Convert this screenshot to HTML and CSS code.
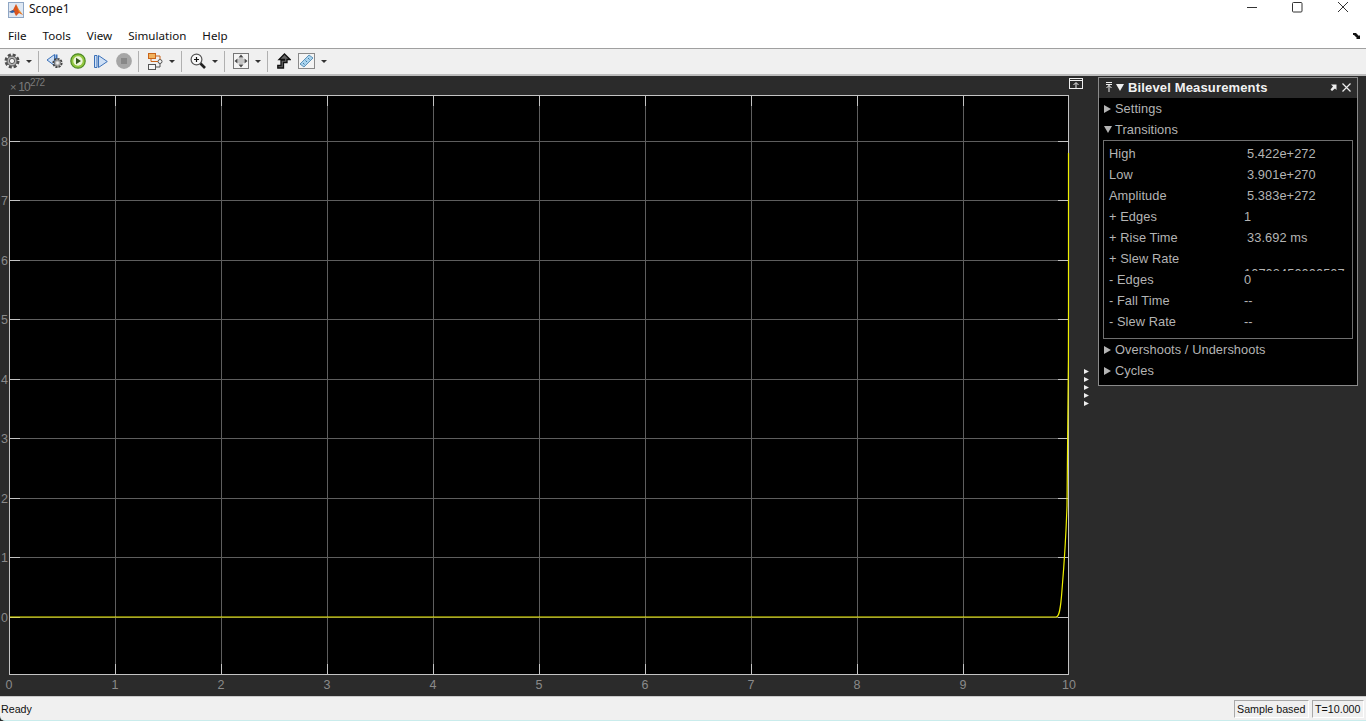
FILE: index.html
```html
<!DOCTYPE html>
<html lang="en">

<head>
    <meta charset="UTF-8">
    <title>Scope1</title>
    <link rel="stylesheet" href="styles.css">
</head>

<body>
<div class="titlebar">
    <svg class="appicon" width="16" height="16" viewBox="0 0 16 16">
        <rect x="0.5" y="0.5" width="15" height="15" fill="#dfe8f3" stroke="#8fa6c4"/>
        <path d="M1 10 L5 8 L8 2 L11 8 L15 13 L11 11 L8 14 L6 10 Z" fill="#d9541e"/>
        <path d="M1 10 L5 8 L7 10 L4 11 Z" fill="#2b62a8"/>
        <path d="M8 2 L11 8 L15 13 L11 10 Z" fill="#f0982c"/>
    </svg>
    <span class="wintitle">Scope1</span>
    <div class="winbtns">
        <svg width="46" height="14" viewBox="0 0 46 14"><path d="M19 7.5 H29" stroke="#333" fill="none"/></svg>
        <svg width="46" height="14" viewBox="0 0 46 14"><rect x="18.5" y="2.5" width="9.500" height="9.500" rx="1" stroke="#333" fill="none"/></svg>
        <svg width="46" height="14" viewBox="0 0 46 14"><path d="M18 2 L28 12 M28 2 L18 12" stroke="#333" fill="none"/></svg>
    </div>
</div>

<div class="menubar">
    <span class="menu">File</span>
    <span class="menu">Tools</span>
    <span class="menu">View</span>
    <span class="menu">Simulation</span>
    <span class="menu">Help</span>
    <svg class="dock" width="9" height="7" viewBox="0 0 9 7"><path d="M0 0 H3 L6 3 L7 2 V6 H3 L4 5 L1 2 H0 Z" fill="#111"/></svg>
</div>

<div class="toolbar">
    <span class="tool">
        <svg width="16" height="16" viewBox="0 0 16 16"><circle cx="8" cy="8" r="6.200" fill="none" stroke="#4f4f4f" stroke-width="2.600" stroke-dasharray="3 1.860"/><circle cx="8" cy="8" r="5" fill="#b4b4b4" stroke="#555"/><circle cx="8" cy="8" r="2.600" fill="#f2f2f2" stroke="#5c5c5c"/></svg>
    </span>
    <span class="caret"></span>
    <span class="sep"></span>

    <span class="tool">
        <svg width="18" height="16" viewBox="0 0 18 16"><path d="M8.500 1.500 L1 7 L8.500 12.500 Z" fill="#cfe0f5" stroke="#3a70b8"/><path d="M10.500 1.500 V6" stroke="#3a70b8" stroke-width="2"/><circle cx="11.500" cy="10" r="4.200" fill="none" stroke="#444" stroke-width="1.800" stroke-dasharray="2.200 1"/><circle cx="11.500" cy="10" r="3.200" fill="#b4b4b4" stroke="#555" stroke-width=".6"/><circle cx="11.500" cy="10" r="1.400" fill="#f2f2f2"/></svg>
    </span>
    <span class="tool">
        <svg width="16" height="16" viewBox="0 0 16 16"><circle cx="8" cy="8" r="7.200" fill="#93c740" stroke="#4c8a22" stroke-width="1.200"/><circle cx="8" cy="8" r="4.700" fill="#eef6dc"/><path d="M6 4.800 L11 8 L6 11.200 Z" fill="#33561c"/></svg>
    </span>
    <span class="tool">
        <svg width="14" height="13" viewBox="0 0 14 13"><path d="M0.500 0.500 H3 V12.500 H0.500 Z M4.500 0.500 L13.300 6.500 L4.500 12.500 Z" fill="#cfe0f5" stroke="#3a70b8"/></svg>
    </span>
    <span class="tool">
        <svg width="16" height="16" viewBox="0 0 16 16"><circle cx="8" cy="8" r="7.900" fill="#a6a6a6"/><rect x="5" y="5" width="6" height="6" fill="#888"/></svg>
    </span>
    <span class="sep"></span>

    <span class="tool">
        <svg width="16" height="17" viewBox="0 0 16 17"><rect x="1.500" y="0.500" width="7" height="5" fill="#f2b25c" stroke="#c9641a"/><rect x="1.500" y="11.500" width="7" height="5" fill="#f6f6f6" stroke="#555"/><circle cx="13" cy="8.500" r="2" fill="#f6f6f6" stroke="#555"/><path d="M8.500 3 H13 V6.500 M4 5.500 V8.500 H11" stroke="#c9641a" fill="none"/><path d="M8.500 14 H13 V10.500" stroke="#555" fill="none"/></svg>
    </span>
    <span class="caret"></span>
    <span class="sep"></span>

    <span class="tool">
        <svg width="16" height="16" viewBox="0 0 16 16"><circle cx="6.500" cy="6.500" r="5.400" fill="#f8f8f8" stroke="#555" stroke-width="1.200"/><path d="M4 6.500 H9 M6.500 4 V9" stroke="#111" stroke-width="1.200"/><path d="M10.500 10.500 L15 15" stroke="#222" stroke-width="2.600"/></svg>
    </span>
    <span class="caret"></span>
    <span class="sep"></span>

    <span class="tool">
        <svg width="16" height="16" viewBox="0 0 16 16"><rect x="0.500" y="0.500" width="15" height="15" fill="#f4f4f4" stroke="#777"/><circle cx="8" cy="8" r="3.200" fill="#c4c4c4"/><path d="M8 1.500 L10.500 4.500 H5.500 Z M8 14.500 L10.500 11.500 H5.500 Z M1.500 8 L4.500 5.500 V10.500 Z M14.500 8 L11.500 5.500 V10.500 Z" fill="#4a4a4a"/></svg>
    </span>
    <span class="caret"></span>
    <span class="sep"></span>

    <span class="tool">
        <svg width="14" height="16" viewBox="0 0 14 16"><path d="M7.500 1 L13 6.500 H10 V9.500 H6.500 V15 H0.800 V12.500 H4 V7 H7.500 V6.500 H2 Z" fill="#666" stroke="#111" stroke-width="1.300"/></svg>
    </span>
    <span class="tool">
        <svg width="17" height="16" viewBox="0 0 17 16"><rect x="0.500" y="0.500" width="16" height="15" fill="#f4f4f4" stroke="#8a8a8a"/><path d="M2 11 L11 2 L15 5 L6 14 Z" fill="#a9d3ee" stroke="#5d93b8"/><path d="M5 10 L6.500 11.500 M7.500 7.500 L9 9 M10 5 L11.500 6.500" stroke="#3f7ea8"/></svg>
    </span>
    <span class="caret"></span>
</div>

<div class="main">
    <div class="plot">
        <svg class="axes" width="1098" height="620" viewBox="0 0 1098 620">
            <rect x="9.500" y="19.500" width="1059" height="579" fill="#000" stroke="#c4c4c4"/>
            <g stroke="#5e5e5e">
                <path d="M115.500 20 V598 M221.500 20 V598 M327.500 20 V598 M433.500 20 V598 M539.500 20 V598 M645.500 20 V598 M751.500 20 V598 M857.500 20 V598 M963.500 20 V598"/>
                <path d="M10 65.500 H1068 M10 124.500 H1068 M10 184.500 H1068 M10 243.500 H1068 M10 303.500 H1068 M10 362.500 H1068 M10 422.500 H1068 M10 481.500 H1068 M10 541.500 H1068"/>
            </g>
            <g stroke="#c4c4c4">
                <path d="M115.500 20 V30 M221.500 20 V30 M327.500 20 V30 M433.500 20 V30 M539.500 20 V30 M645.500 20 V30 M751.500 20 V30 M857.500 20 V30 M963.500 20 V30"/>
                <path d="M115.500 588 V598 M221.500 588 V598 M327.500 588 V598 M433.500 588 V598 M539.500 588 V598 M645.500 588 V598 M751.500 588 V598 M857.500 588 V598 M963.500 588 V598"/>
                <path d="M10 65.500 H20 M10 124.500 H20 M10 184.500 H20 M10 243.500 H20 M10 303.500 H20 M10 362.500 H20 M10 422.500 H20 M10 481.500 H20 M10 541.500 H20"/>
                <path d="M1058 65.500 H1068 M1058 124.500 H1068 M1058 184.500 H1068 M1058 243.500 H1068 M1058 303.500 H1068 M1058 362.500 H1068 M1058 422.500 H1068 M1058 481.500 H1068 M1058 541.500 H1068"/>
            </g>
            <path class="trace" d="M10 541 H1056 C1059 541 1060.500 535 1062 514 C1064 490 1066 460 1067 430 C1068 380 1068.500 300 1068.500 230 V77"/>
            <g class="ticks">
                <text x="1" y="546">0</text><text x="1" y="486">1</text><text x="1" y="427">2</text><text x="1" y="367">3</text><text x="1" y="308">4</text><text x="1" y="248">5</text><text x="1" y="189">6</text><text x="1" y="129">7</text><text x="1" y="70">8</text>
            </g>
            <g class="ticks mid">
                <text x="9" y="613">0</text><text x="115" y="613">1</text><text x="221" y="613">2</text><text x="327" y="613">3</text><text x="433" y="613">4</text><text x="539" y="613">5</text><text x="645" y="613">6</text><text x="751" y="613">7</text><text x="857" y="613">8</text><text x="963" y="613">9</text><text x="1069" y="613">10</text>
            </g>
            <text class="ticks scale" x="10" y="15"><tspan class="times">×</tspan> 10<tspan class="exp" dy="-5">272</tspan></text>
            <rect x="1069.500" y="2.500" width="13" height="10" fill="none" stroke="#eee"/>
            <path d="M1070 4.500 H1082 M1076 12 V7 M1073.500 9 L1076 6.500 L1078.500 9" fill="none" stroke="#eee"/>
            <path d="M1084 293 L1089 295.500 L1084 298 Z M1084 301 L1089 303.500 L1084 306 Z M1084 309 L1089 311.500 L1084 314 Z M1084 317 L1089 319.500 L1084 322 Z M1084 325 L1089 327.500 L1084 330 Z" fill="#eee"/>
        </svg>
    </div>

    <div class="panel">
        <div class="panel-head">
            <svg width="8" height="10" viewBox="0 0 8 10"><path d="M1 0.500 H7 M1 2.500 H7 M4 3 V10 M1.500 6 L4 3.500 L6.500 6" fill="none" stroke="#eee"/></svg>
            <span class="tri-down"></span>
            <span class="panel-title">Bilevel Measurements</span>
            <svg class="undock" width="7" height="7" viewBox="0 0 7 7"><path d="M1 0.500 H6.500 V6 L5 4.500 L2 7 L0.500 5.500 L3 2.500 Z" fill="#eee"/></svg>
            <svg width="9" height="9" viewBox="0 0 9 9"><path d="M0.500 0.500 L8.500 8.500 M8.500 0.500 L0.500 8.500" stroke="#eee" stroke-width="1.200"/></svg>
        </div>
        <div class="section"><span class="tri-right"></span>Settings</div>
        <div class="section"><span class="tri-down small"></span>Transitions</div>
        <div class="readings">
            <div class="row"><span class="name">High</span><span class="val">5.422e+272</span></div>
            <div class="row"><span class="name">Low</span><span class="val">3.901e+270</span></div>
            <div class="row"><span class="name">Amplitude</span><span class="val">5.383e+272</span></div>
            <div class="row"><span class="name">+ Edges</span><span class="val v-left">1</span></div>
            <div class="row"><span class="name">+ Rise Time</span><span class="val">33.692 ms</span></div>
            <div class="row"><span class="name">+ Slew Rate</span></div>
            <div class="row"><span class="name">- Edges</span><span class="val v-left">0</span></div>
            <div class="row"><span class="name">- Fall Time</span><span class="val v-left">--</span></div>
            <div class="row"><span class="name">- Slew Rate</span><span class="val v-left">--</span></div>
            <div class="slew-clip">10702450000507</div>
        </div>
        <div class="section"><span class="tri-right"></span>Overshoots / Undershoots</div>
        <div class="section"><span class="tri-right"></span>Cycles</div>
    </div>
</div>

<div class="statusbar">
    <span class="ready">Ready</span>
    <span class="stat s-mode">Sample based</span>
    <span class="stat s-time">T=10.000</span>
</div>
</body>

</html>
```

FILE: styles.css
```css
* {
    margin: 0;
    padding: 0;
    box-sizing: border-box;
}

html, body {
    width: 1366px;
    height: 721px;
    overflow: hidden;
    background: #2b2b2b;
}

body {
    display: flex;
    flex-direction: column;
    font-family: "Noto Sans", sans-serif;
    color: #111;
}

.titlebar {
    height: 27px;
    background: #fff;
    display: flex;
    align-items: center;
    padding-left: 8px;
    flex: none;
}

.appicon {
    margin-right: 5px;
    margin-top: -8px;
}

.wintitle {
    font-size: 12px;
    margin-top: -11px;
}

.winbtns {
    margin-left: auto;
    margin-top: -14px;
    display: flex;
}

.winbtns svg {
    display: block;
}

.menubar {
    height: 21px;
    background: #fff;
    position: relative;
    display: flex;
    align-items: center;
    gap: 16px;
    font-size: 11.6px;
    padding-left: 8px;
    padding-bottom: 5px;
    flex: none;
}

.dock {
    position: absolute;
    right: 4px;
    top: 6px;
}

.toolbar {
    height: 28px;
    background: #f0f0f0;
    border-top: 1px solid #a0a0a0;
    border-bottom: 2px solid #bcbcbc;
    display: flex;
    align-items: center;
    padding-left: 1px;
    padding-bottom: 1px;
    flex: none;
}

.tool {
    width: 23px;
    height: 22px;
    display: flex;
    align-items: center;
    justify-content: center;
}

.tool:first-child {
    width: 22px;
}

.caret {
    width: 12px;
    height: 22px;
    display: flex;
    align-items: center;
    justify-content: center;
}

.caret::after {
    content: '';
    border-left: 3px solid transparent;
    border-right: 3px solid transparent;
    border-top: 3px solid #333;
}

.sep {
    width: 1px;
    height: 21px;
    background: #b0b0b0;
    margin: 0 4px 0 3px;
}

.main {
    flex: 1;
    display: flex;
    background: #2b2b2b;
    min-height: 0;
}

.plot {
    width: 1098px;
    flex: none;
}

.axes {
    display: block;
    font-family: "Liberation Sans", sans-serif;
}

.trace {
    fill: none;
    stroke: #f0f000;
    stroke-width: 1.200;
}

.ticks {
    font-size: 12.500px;
    fill: #8a8a8a;
}

.ticks.mid {
    text-anchor: middle;
}

.scale {
    font-size: 12px;
    letter-spacing: -0.800px;
    fill: #7c7c7c;
}

.times {
    font-size: 11px;
}

.exp {
    font-size: 10px;
}

.panel {
    width: 260px;
    height: 309px;
    margin-top: 1px;
    border: 1px solid #8a8a8a;
    background: #000;
    font-family: "Liberation Sans", sans-serif;
    font-size: 12.800px;
    letter-spacing: 0.080px;
    color: #b4b4b4;
    display: flex;
    flex-direction: column;
}

.panel-head {
    height: 20px;
    background: #2b2b2b;
    display: flex;
    align-items: center;
    padding: 0 6px 2px 6px;
    flex: none;
}

.panel-title {
    font-size: 13px;
    font-weight: bold;
    color: #f2f2f2;
    letter-spacing: 0.150px;
    margin-left: 4px;
}

.undock {
    margin-left: auto;
    margin-right: 5px;
}

.tri-right, .tri-down {
    display: inline-block;
    width: 0;
    height: 0;
}

.tri-right {
    border-top: 4px solid transparent;
    border-bottom: 4px solid transparent;
    border-left: 7px solid #b4b4b4;
    margin-right: 4px;
}

.tri-down {
    border-left: 4px solid transparent;
    border-right: 4px solid transparent;
    border-top: 7px solid #eee;
    margin-left: 3px;
}

.tri-down.small {
    border-top-color: #b4b4b4;
    margin: 0 3px 0 0;
}

.section {
    height: 21px;
    display: flex;
    align-items: center;
    padding-left: 5px;
    flex: none;
}

.readings {
    margin: 0 4px;
    height: 199px;
    border: 1px solid #6f6f6f;
    padding: 2px 0 0 5px;
    flex: none;
    position: relative;
}

.row {
    height: 21px;
    display: flex;
    align-items: center;
    color: #b4b4b4;
}

.name {
    width: 138px;
    flex: none;
}

.val {
    white-space: nowrap;
}

.v-left {
    margin-left: -3px;
}

/* value that the panel clips: only the top of the digits shows above the next row */
.slew-clip {
    position: absolute;
    left: 140px;
    top: 126px;
    height: 4px;
    overflow: hidden;
    line-height: 14px;
    white-space: nowrap;
}

.statusbar {
    height: 25px;
    flex: none;
    background: #f0f0f0;
    border-top: 1px solid #c8c8c8;
    border-bottom: 1px solid #c9ecec;
    border-bottom-left-radius: 5px;
    display: flex;
    align-items: center;
    font-family: "Liberation Sans", sans-serif;
    font-size: 10.700px;
    padding-right: 2px;
}

.ready {
    margin-left: 1px;
    margin-right: auto;
}

.stat {
    height: 18px;
    display: flex;
    align-items: center;
    padding-left: 2px;
    border-left: 1px solid #a9a9a9;
    border-top: 1px solid #a9a9a9;
    border-right: 1px solid #fff;
    border-bottom: 1px solid #fff;
}

.s-mode {
    width: 75px;
    margin-right: 3px;
}

.s-time {
    width: 52px;
}
```
